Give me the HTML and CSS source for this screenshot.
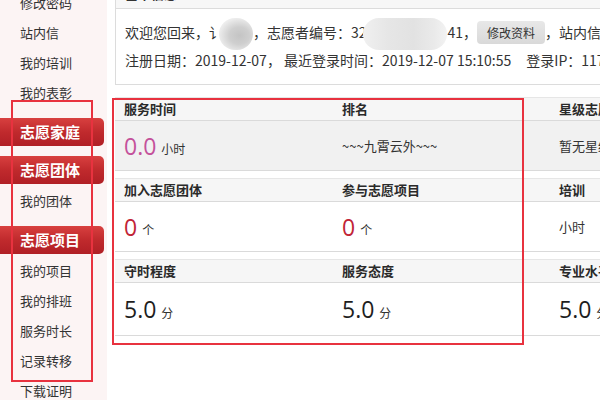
FILE: index.html
```html
<!DOCTYPE html>
<html lang="zh-CN">
<head>
<meta charset="utf-8">
<title>个人中心</title>
<link rel="stylesheet" href="styles.css">
</head>
<body>
<div class="page">
  <aside class="sidebar">
    <div class="item">修改密码</div>
    <div class="item">站内信</div>
    <div class="item">我的培训</div>
    <div class="item">我的表彰</div>
    <div class="group">志愿家庭</div>
    <div class="group">志愿团体</div>
    <div class="item">我的团体</div>
    <div class="group">志愿项目</div>
    <div class="item">我的项目</div>
    <div class="item">我的排班</div>
    <div class="item">服务时长</div>
    <div class="item">记录转移</div>
    <div class="item">下载证明</div>
  </aside>
  <main class="main">
    <section class="panel">
      <div class="panel-head">基本信息</div>
      <div class="panel-body">
        <div class="line">欢迎您回来，讠<span class="blob blob-a"></span>，志愿者编号：32<span class="blob blob-b"></span>41，<span class="btn">修改资料</span>，站内信</div>
        <div class="line">注册日期：2019-12-07，<span class="gap">最近登录时间：2019-12-07 15:10:55</span><span class="gap wide">登录IP：117.136.0.1</span></div>
      </div>
    </section>
    <section class="stats">
      <div class="block">
        <div class="cell head">服务时间</div>
        <div class="cell head">排名</div>
        <div class="cell head">星级志愿者</div>
        <div class="cell val grey"><span class="num pink">0.0</span><span class="unit">小时</span></div>
        <div class="cell val grey"><span class="txt">~~~九霄云外~~~</span></div>
        <div class="cell val grey"><span class="txt">暂无星级</span></div>
      </div>
      <div class="block">
        <div class="cell head">加入志愿团体</div>
        <div class="cell head">参与志愿项目</div>
        <div class="cell head">培训</div>
        <div class="cell val"><span class="num red">0</span><span class="unit">个</span></div>
        <div class="cell val"><span class="num red">0</span><span class="unit">个</span></div>
        <div class="cell val"><span class="txt">小时</span></div>
      </div>
      <div class="block">
        <div class="cell head">守时程度</div>
        <div class="cell head">服务态度</div>
        <div class="cell head">专业水平</div>
        <div class="cell val tall"><span class="num">5.0</span><span class="unit">分</span></div>
        <div class="cell val tall"><span class="num">5.0</span><span class="unit">分</span></div>
        <div class="cell val tall"><span class="num">5.0</span><span class="unit">分</span></div>
      </div>
    </section>
  </main>
</div>
<div class="mark mark-side"></div>
<div class="mark mark-main"></div>
</body>
</html>
```
FILE: styles.css
```css
html, body {
  margin: 0;
  padding: 0;
  width: 600px;
  height: 400px;
  overflow: hidden;
  background: #fff;
  font-family: "Noto Sans CJK SC", "Microsoft YaHei", sans-serif;
  color: #333;
}
.page {
  display: flex;
  align-items: flex-start;
  margin-top: -21px;
  width: 800px;
}
.sidebar {
  width: 107px;
  flex: none;
  background: #fcf4f4;
  padding-top: 9px;
  padding-bottom: 40px;
}
.item {
  height: 30px;
  line-height: 30px;
  padding-left: 20px;
  font-size: 13px;
  color: #333;
}
.group {
  width: 84px;
  height: 28px;
  line-height: 28px;
  margin: 10px 0 2px;
  padding-left: 20px;
  font-size: 15px;
  font-weight: bold;
  color: #fff;
  background: linear-gradient(#d8403f, #c02a2d 50%, #b01f25);
  border-radius: 0 5px 5px 0;
}
.main {
  margin-left: 8px;
  width: 660px;
  flex: none;
}
.panel {
  border: 1px solid #dcdcdc;
  border-top: none;
}
.panel-head {
  height: 29px;
  line-height: 29px;
  padding-left: 9px;
  font-size: 13px;
  font-weight: bold;
  background: #f7f7f7;
  border-bottom: 1px solid #dcdcdc;
}
.panel-body {
  padding: 9px 0 10px 9px;
}
.line {
  height: 28px;
  line-height: 28px;
  font-size: 14px;
  color: #333;
  white-space: nowrap;
}
.gap {
  margin-left: 3px;
}
.gap.wide {
  margin-left: 15px;
}
.blob {
  display: inline-block;
  height: 32px;
  vertical-align: middle;
  border-radius: 16px;
}
.blob-a {
  width: 34px;
  margin-left: -4px;
  background: radial-gradient(ellipse at 60% 55%, #c4c4c4 0, #cfcfcf 35%, #ececec 70%, #f6f6f6 100%);
}
.blob-b {
  width: 84px;
  margin-left: -4px;
  margin-right: 1px;
  background: linear-gradient(90deg, #f0f0f0, #e6e6e6 30%, #e2e2e2 60%, #eaeaea 85%, #f3f3f3);
}
.btn {
  display: inline-block;
  height: 23px;
  line-height: 23px;
  padding: 0 10px;
  font-size: 12px;
  color: #333;
  background: linear-gradient(#e8e8e8, #d9d9d9);
  border-radius: 4px;
  vertical-align: middle;
  margin-top: -3px;
}
.stats {
  margin-top: 12px;
}
.block {
  display: grid;
  grid-template-columns: 218px 217px 217px;
  border-top: 1px solid #e6e6e6;
  margin-bottom: 7px;
}
.cell {
  padding-left: 9px;
}
.head {
  height: 22px;
  line-height: 22px;
  font-size: 13px;
  font-weight: bold;
  color: #2a2a2a;
  background: #f6f6f6;
  border-bottom: 1px solid #dadada;
}
.val {
  height: 49px;
  display: flex;
  align-items: center;
  border-bottom: 1px solid #dadada;
  background: #fff;
}
.val.grey {
  background: #f1f1f1;
}
.val.tall {
  height: 52px;
}
.num {
  font-size: 23px;
  color: #1e1e1e;
  font-family: "Open Sans", "Noto Sans", sans-serif;
}
.num.pink { color: #c4519b; }
.num.red { color: #c12436; }
.unit {
  font-size: 12px;
  color: #333;
  margin-left: 5px;
  margin-top: 6px;
}
.txt {
  font-size: 13px;
  color: #333;
}
.mark {
  position: absolute;
  border: 2px solid #e8323f;
  box-sizing: border-box;
}
.mark-side {
  left: 11px;
  top: 100px;
  width: 82px;
  height: 282px;
}
.mark-main {
  left: 112px;
  top: 98px;
  width: 412px;
  height: 247px;
}
```
